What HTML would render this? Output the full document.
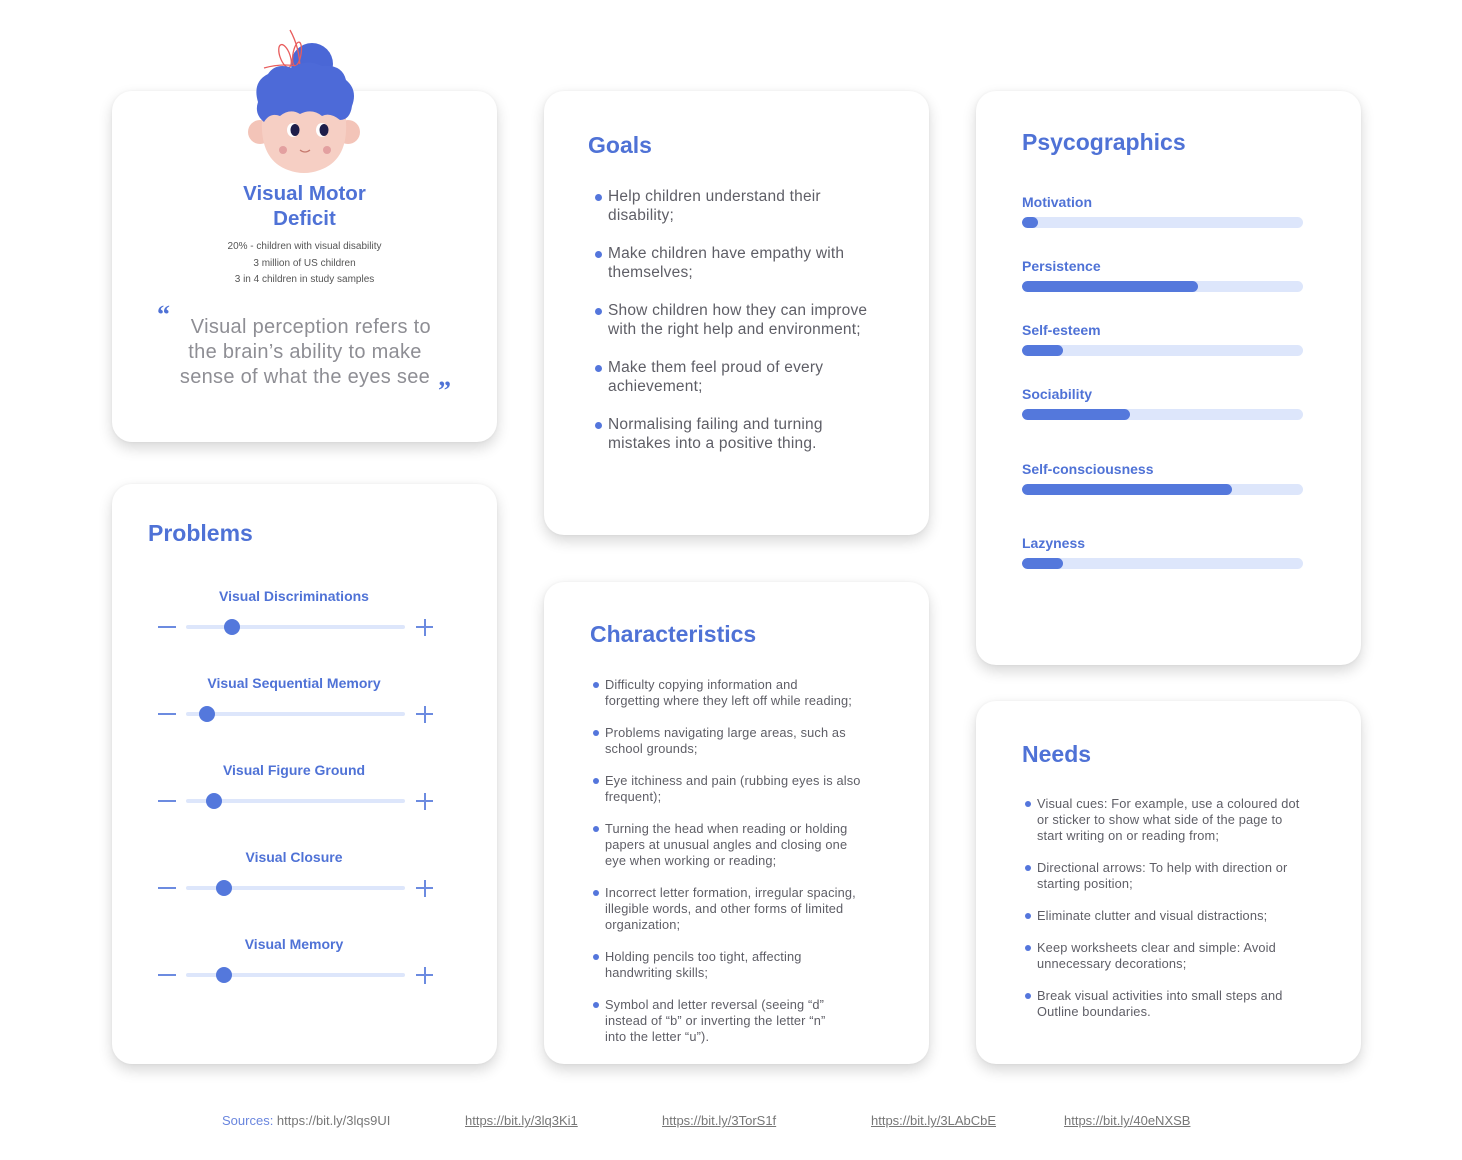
<!DOCTYPE html>
<html><head><meta charset="utf-8"><style>
*{margin:0;padding:0;box-sizing:border-box}
body{width:1462px;height:1160px;background:#fff;position:relative;overflow:hidden;font-family:"Liberation Sans",sans-serif;}
.card{position:absolute;background:#fff;border-radius:20px;box-shadow:0 6px 14px rgba(0,0,0,.16),0 0 3px rgba(0,0,0,.05);}
.a{position:absolute}
.h{color:#4f72d6;font-weight:bold;font-size:23px;position:absolute}
.it{position:absolute;color:#5e5e66;white-space:nowrap}
.it:before{content:"";position:absolute;left:-13px;top:7px;width:7px;height:7px;border-radius:50%;background:#5476dc}
.g{font-size:15.5px;line-height:19px;letter-spacing:.2px}
.c{font-size:12.8px;line-height:16px;letter-spacing:.15px}
.c:before{top:5px;width:6px;height:6px;left:-12px}
.pl{position:absolute;left:1022px;color:#4f72d6;font-weight:bold;font-size:14px}
.bar{position:absolute;left:1022px;width:281px;height:11px;border-radius:6px;background:#dde6fb;overflow:hidden}
.bar i{display:block;height:100%;background:#5478dc;border-radius:6px}
.sl{position:absolute;width:300px;left:144px;text-align:center;color:#4f72d6;font-weight:bold;font-size:14px}
.tr{position:absolute;left:186px;width:219px;height:4px;border-radius:2px;background:#dde6fb}
.mn{position:absolute;left:158px;width:18px;height:2px;background:#6c8be0}
.ps{position:absolute;left:416px;width:17px;height:17px}
.ps:before{content:"";position:absolute;left:0;top:7px;width:17px;height:2px;background:#6c8be0}
.ps:after{content:"";position:absolute;left:7.5px;top:0;width:2px;height:17px;background:#6c8be0}
.kn{position:absolute;width:16px;height:16px;border-radius:50%;background:#5478dc}
</style></head><body>

<div class="card" style="left:112px;top:91px;width:385px;height:351px"></div>
<div class="card" style="left:112px;top:484px;width:385px;height:580px"></div>
<div class="card" style="left:544px;top:91px;width:385px;height:444px"></div>
<div class="card" style="left:544px;top:582px;width:385px;height:482px"></div>
<div class="card" style="left:976px;top:91px;width:385px;height:574px"></div>
<div class="card" style="left:976px;top:701px;width:385px;height:363px"></div>

<svg class="a" style="left:0;top:0" width="500" height="200" viewBox="0 0 500 200">
<circle cx="260" cy="132" r="12" fill="#f3c4b8"/><circle cx="348" cy="132" r="12" fill="#f3c4b8"/>
<path d="M262 120 Q260 100 304 100 Q348 100 346 122 Q348 160 320 170 Q304 176 288 170 Q260 160 262 120Z" fill="#f6cfc4"/>
<circle cx="312" cy="64" r="21" fill="#4a67d6"/>
<g stroke="#e85d5d" stroke-width="1.3" fill="none">
<path d="M290 30 Q300 48 300 70"/><ellipse cx="285" cy="56" rx="5" ry="12" transform="rotate(-20 285 56)"/><ellipse cx="297" cy="54" rx="4" ry="12" transform="rotate(10 297 54)"/><path d="M264 68 Q285 62 306 68"/></g>
<path d="M258 102 Q252 82 268 74 Q276 62 292 68 Q306 58 322 66 Q342 64 346 80 Q358 90 352 106 Q350 120 340 120 Q330 112 322 116 Q312 108 300 114 Q290 108 280 116 Q270 112 264 122 Q254 114 258 102Z" fill="#4d6ad8"/>
<ellipse cx="293" cy="130" rx="6" ry="7" fill="#fff"/><ellipse cx="295" cy="130" rx="4.5" ry="6" fill="#1e1e4a"/>
<ellipse cx="322" cy="130" rx="6" ry="7" fill="#fff"/><ellipse cx="324" cy="130" rx="4.5" ry="6" fill="#1e1e4a"/>
<circle cx="283" cy="150" r="4" fill="#e3a0a0"/><circle cx="327" cy="150" r="4" fill="#e3a0a0"/>
<path d="M300 150 Q305 154 310 150" stroke="#c57a6e" stroke-width="1.2" fill="none"/>
</svg>

<div class="a" style="left:112px;top:181px;width:385px;text-align:center;color:#4f72d6;font-weight:bold;font-size:20.5px;line-height:25px">Visual Motor<br>Deficit</div>
<div class="a" style="left:112px;top:239px;width:385px;text-align:center;color:#555;font-size:10px;line-height:16.5px">20% - children with visual disability<br>3 million of US children<br>3 in 4 children in study samples</div>
<div class="a" style="left:157px;top:300px;color:#4f72d6;font-size:26px;font-weight:bold;font-family:'Liberation Serif',serif">“</div>
<div class="a" style="left:438px;top:376px;color:#4f72d6;font-size:26px;font-weight:bold;font-family:'Liberation Serif',serif">”</div>
<div class="a" style="left:160px;top:315px;width:290px;text-align:center;color:#8e8e94;font-size:20px;line-height:25px;letter-spacing:.3px;white-space:nowrap">&nbsp;&nbsp;Visual perception refers to<br>the brain’s ability to make<br>sense of what the eyes see</div>

<div class="h" style="left:148px;top:520px">Problems</div>
<div class="sl" style="top:588px">Visual Discriminations</div>
<div class="mn" style="top:626px"></div><div class="tr" style="top:625px"></div><div class="kn" style="left:224px;top:619px"></div><div class="ps" style="top:619px"></div>
<div class="sl" style="top:675px">Visual Sequential Memory</div>
<div class="mn" style="top:713px"></div><div class="tr" style="top:712px"></div><div class="kn" style="left:199px;top:706px"></div><div class="ps" style="top:706px"></div>
<div class="sl" style="top:762px">Visual Figure Ground</div>
<div class="mn" style="top:800px"></div><div class="tr" style="top:799px"></div><div class="kn" style="left:206px;top:793px"></div><div class="ps" style="top:793px"></div>
<div class="sl" style="top:849px">Visual Closure</div>
<div class="mn" style="top:887px"></div><div class="tr" style="top:886px"></div><div class="kn" style="left:216px;top:880px"></div><div class="ps" style="top:880px"></div>
<div class="sl" style="top:936px">Visual Memory</div>
<div class="mn" style="top:974px"></div><div class="tr" style="top:973px"></div><div class="kn" style="left:216px;top:967px"></div><div class="ps" style="top:967px"></div>

<div class="h" style="left:588px;top:132px">Goals</div>
<div class="it g" style="left:608px;top:187px">Help children understand their<br>disability;</div>
<div class="it g" style="left:608px;top:244px">Make children have empathy with<br>themselves;</div>
<div class="it g" style="left:608px;top:301px">Show children how they can improve<br>with the right help and environment;</div>
<div class="it g" style="left:608px;top:358px">Make them feel proud of every<br>achievement;</div>
<div class="it g" style="left:608px;top:415px">Normalising failing and turning<br>mistakes into a positive thing.</div>

<div class="h" style="left:590px;top:621px">Characteristics</div>
<div class="it c" style="left:605px;top:677px">Difficulty copying information and<br>forgetting where they left off while reading;</div>
<div class="it c" style="left:605px;top:725px">Problems navigating large areas, such as<br>school grounds;</div>
<div class="it c" style="left:605px;top:773px">Eye itchiness and pain (rubbing eyes is also<br>frequent);</div>
<div class="it c" style="left:605px;top:821px">Turning the head when reading or holding<br>papers at unusual angles and closing one<br>eye when working or reading;</div>
<div class="it c" style="left:605px;top:885px">Incorrect letter formation, irregular spacing,<br>illegible words, and other forms of limited<br>organization;</div>
<div class="it c" style="left:605px;top:949px">Holding pencils too tight, affecting<br>handwriting skills;</div>
<div class="it c" style="left:605px;top:997px">Symbol and letter reversal (seeing “d”<br>instead of “b” or inverting the letter “n”<br>into the letter “u”).</div>

<div class="h" style="left:1022px;top:129px">Psycographics</div>
<div class="pl" style="top:194px">Motivation</div><div class="bar" style="top:217px"><i style="width:16px"></i></div>
<div class="pl" style="top:258px">Persistence</div><div class="bar" style="top:281px"><i style="width:176px"></i></div>
<div class="pl" style="top:322px">Self-esteem</div><div class="bar" style="top:345px"><i style="width:41px"></i></div>
<div class="pl" style="top:386px">Sociability</div><div class="bar" style="top:409px"><i style="width:108px"></i></div>
<div class="pl" style="top:461px">Self-consciousness</div><div class="bar" style="top:484px"><i style="width:210px"></i></div>
<div class="pl" style="top:535px">Lazyness</div><div class="bar" style="top:558px"><i style="width:41px"></i></div>

<div class="h" style="left:1022px;top:741px">Needs</div>
<div class="it c" style="left:1037px;top:796px">Visual cues: For example, use a coloured dot<br>or sticker to show what side of the page to<br>start writing on or reading from;</div>
<div class="it c" style="left:1037px;top:860px">Directional arrows: To help with direction or<br>starting position;</div>
<div class="it c" style="left:1037px;top:908px">Eliminate clutter and visual distractions;</div>
<div class="it c" style="left:1037px;top:940px">Keep worksheets clear and simple: Avoid<br>unnecessary decorations;</div>
<div class="it c" style="left:1037px;top:988px">Break visual activities into small steps and<br>Outline boundaries.</div>

<div class="a" style="left:222px;top:1113px;font-size:13px;color:#777"><span style="color:#6a86de">Sources:</span> https://bit.ly/3lqs9UI</div>
<div class="a" style="left:465px;top:1113px;font-size:13px;color:#777;text-decoration:underline">https://bit.ly/3lq3Ki1</div>
<div class="a" style="left:662px;top:1113px;font-size:13px;color:#777;text-decoration:underline">https://bit.ly/3TorS1f</div>
<div class="a" style="left:871px;top:1113px;font-size:13px;color:#777;text-decoration:underline">https://bit.ly/3LAbCbE</div>
<div class="a" style="left:1064px;top:1113px;font-size:13px;color:#777;text-decoration:underline">https://bit.ly/40eNXSB</div>
</body></html>
